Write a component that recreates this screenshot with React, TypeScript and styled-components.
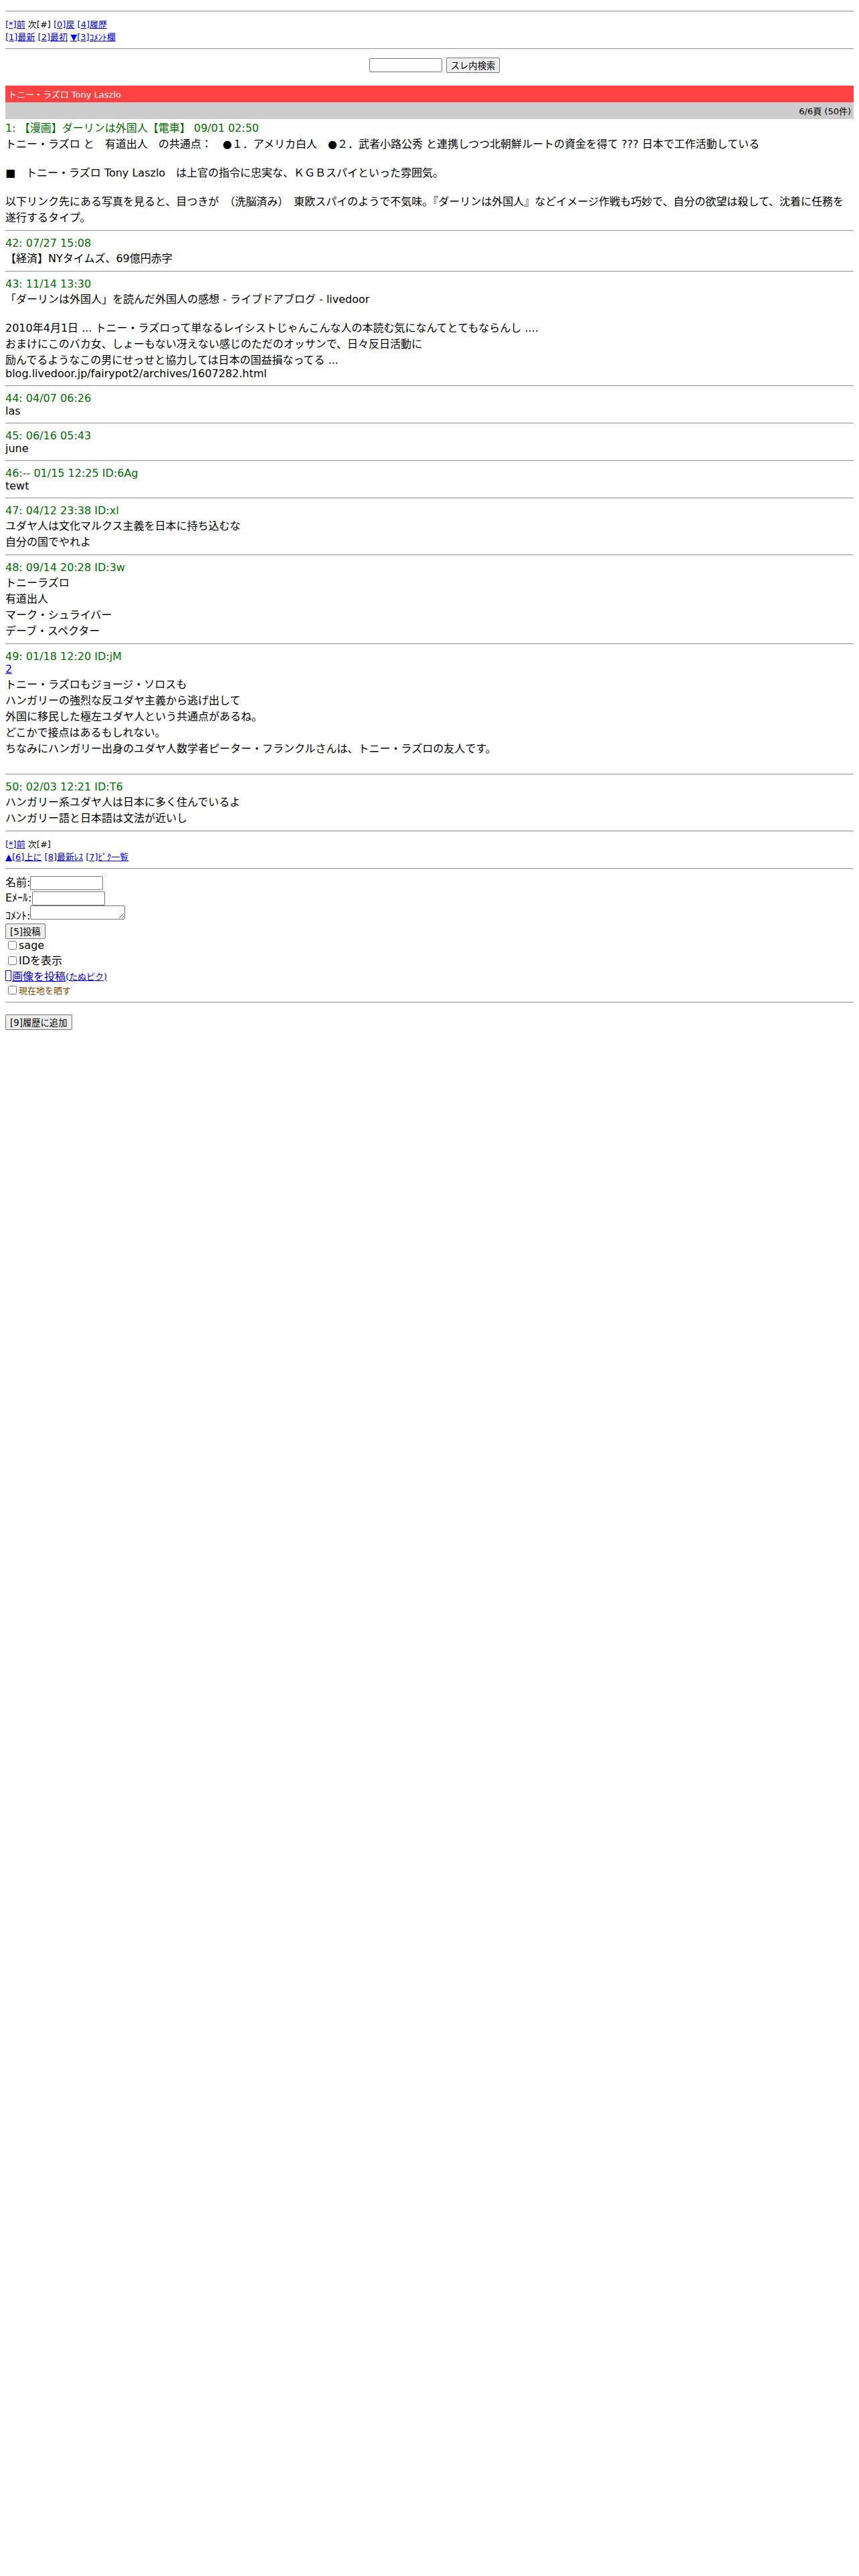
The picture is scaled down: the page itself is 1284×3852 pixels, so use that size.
import React from 'react';
import styled, { createGlobalStyle } from 'styled-components';

const GlobalStyle = createGlobalStyle`
  body {
    margin: 8px;
    background: #fff;
    color: #000;
    font-family: "DejaVu Sans", "Noto Sans CJK JP", sans-serif;
    font-size: 16px;
  }
`;

const Rule = styled.hr`
  margin: 8px 0;
  border: 1px inset;
  color: gray;
`;

const NavBlock = styled.div`
  font-size: 13px;
`;

const NavLink = styled.a`
  color: #0000ee;
  text-decoration: underline;
`;

const Bracket = styled.span`
  color: #0000ee;
`;

const SearchForm = styled.form`
  display: flex;
  justify-content: center;
  align-items: center;
  gap: 6px;
  margin: 0;
  padding: 4px 0 19px 15px;
`;

const TextBox = styled.input<{ $w?: number }>`
  box-sizing: border-box;
  width: ${(p) => p.$w ?? 109}px;
  height: 21px;
  border: 1px solid #767676;
  border-radius: 2px;
  padding: 1px 2px;
  font-size: 13px;
  vertical-align: baseline;
`;

const Btn = styled.button`
  font-family: "DejaVu Sans", "Noto Sans CJK JP", sans-serif;
  font-size: 13.33px;
  padding: 1px 6px;
  border: 1px solid #767676;
  border-radius: 2px;
  background: #efefef;
  color: #000;
`;

const TitleBar = styled.div`
  background: #ff4242;
  color: #fff;
  font-size: 13px;
  padding: 3px 4px;
`;

const PageBar = styled.div`
  background: #cccccc;
  font-size: 13px;
  text-align: right;
  padding: 3px 4px;
`;

const Post = styled.div``;

const PostHead = styled.div`
  color: #006e00;
`;

const PostBody = styled.div``;

const BodyLink = styled.a`
  color: #0000ee;
  text-decoration: underline;
`;

const CommentForm = styled.form`
  margin: 0;
`;

const FieldRow = styled.div`
  line-height: 23px;
`;

const Memo = styled.textarea`
  box-sizing: border-box;
  width: 142px;
  height: 21px;
  vertical-align: baseline;
  border: 1px solid #767676;
  border-radius: 2px;
  resize: both;
  font-size: 13px;
`;

const CheckRow = styled.label<{ $small?: boolean; $tone?: string }>`
  display: block;
  font-size: ${(p) => (p.$small ? '13px' : '16px')};
  color: ${(p) => p.$tone ?? '#000'};
`;

const Check = styled.input`
  margin: 3px 3px 3px 4px;
  width: 13px;
  height: 13px;
  vertical-align: -1px;
`;

const ImageRow = styled.div`
  display: flex;
  align-items: center;
`;

const BrokenImg = styled.span`
  display: inline-block;
  box-sizing: border-box;
  width: 9px;
  height: 16px;
  border: 1px solid #0000ee;
  margin-right: 1px;
`;

const SmallLink = styled.a`
  font-size: 13px;
  color: #0000ee;
  text-decoration: underline;
`;

const Bottom = styled.div`
  padding-top: 9px;
`;

type PostData = { head: string; lines: React.ReactNode[]; trailingBlank?: boolean };

const posts: PostData[] = [
  {
    head: '1: 【漫画】ダーリンは外国人【電車】 09/01 02:50',
    lines: [
      'トニー・ラズロ と　有道出人　の共通点：　●１．アメリカ白人　●２．武者小路公秀 と連携しつつ北朝鮮ルートの資金を得て ??? 日本で工作活動している',
      '',
      '■　トニー・ラズロ Tony Laszlo　は上官の指令に忠実な、ＫＧＢスパイといった雰囲気。',
      '',
      '以下リンク先にある写真を見ると、目つきが　（洗脳済み）　東欧スパイのようで不気味。『ダーリンは外国人』などイメージ作戦も巧妙で、自分の欲望は殺して、沈着に任務を遂行するタイプ。',
    ],
  },
  { head: '42: 07/27 15:08', lines: ['【経済】NYタイムズ、69億円赤字'] },
  {
    head: '43: 11/14 13:30',
    lines: [
      '「ダーリンは外国人」を読んだ外国人の感想 - ライブドアブログ - livedoor',
      '',
      '2010年4月1日 ... トニー・ラズロって単なるレイシストじゃんこんな人の本読む気になんてとてもならんし ....',
      'おまけにこのバカ女、しょーもない冴えない感じのただのオッサンで、日々反日活動に',
      '励んでるようなこの男にせっせと協力しては日本の国益損なってる ...',
      'blog.livedoor.jp/fairypot2/archives/1607282.html',
    ],
  },
  { head: '44: 04/07 06:26', lines: ['las'] },
  { head: '45: 06/16 05:43', lines: ['june'] },
  { head: '46:-- 01/15 12:25 ID:6Ag', lines: ['tewt'] },
  { head: '47: 04/12 23:38 ID:xl', lines: ['ユダヤ人は文化マルクス主義を日本に持ち込むな', '自分の国でやれよ'] },
  { head: '48: 09/14 20:28 ID:3w', lines: ['トニーラズロ', '有道出人', 'マーク・シュライバー', 'デーブ・スペクター'] },
  {
    head: '49: 01/18 12:20 ID:jM',
    lines: [
      <BodyLink href="#">2</BodyLink>,
      'トニー・ラズロもジョージ・ソロスも',
      'ハンガリーの強烈な反ユダヤ主義から逃げ出して',
      '外国に移民した極左ユダヤ人という共通点があるね。',
      'どこかで接点はあるもしれない。',
      'ちなみにハンガリー出身のユダヤ人数学者ピーター・フランクルさんは、トニー・ラズロの友人です。',
    ],
    trailingBlank: true,
  },
  { head: '50: 02/03 12:21 ID:T6', lines: ['ハンガリー系ユダヤ人は日本に多く住んでいるよ', 'ハンガリー語と日本語は文法が近いし'] },
];

function Key({ k, label, pre }: { k: string; label: string; pre?: string }) {
  return (
    <>
      {pre && <NavLink href="#">{pre}</NavLink>}
      <Bracket>[</Bracket>
      <NavLink href="#">{k}</NavLink>
      <Bracket>]</Bracket>
      <NavLink href="#">{label}</NavLink>
    </>
  );
}

export default function App() {
  return (
    <>
      <GlobalStyle />
      <Rule />
      <NavBlock>
        <Key k="*" label="前" /> 次[#] <Key k="0" label="戻" /> <Key k="4" label="履歴" />
        <br />
        <Key k="1" label="最新" /> <Key k="2" label="最初" /> <Key pre="▼" k="3" label="ｺﾒﾝﾄ欄" />
      </NavBlock>
      <Rule />
      <SearchForm onSubmit={(e) => e.preventDefault()}>
        <TextBox type="text" />
        <Btn type="submit">スレ内検索</Btn>
      </SearchForm>
      <TitleBar>トニー・ラズロ Tony Laszlo</TitleBar>
      <PageBar>6/6頁 (50件)</PageBar>
      {posts.map((p, i) => (
        <React.Fragment key={p.head}>
          {i > 0 && <Rule />}
          <Post>
            <PostHead>{p.head}</PostHead>
            <PostBody>
              {p.lines.map((l, j) => (
                <React.Fragment key={j}>
                  {j > 0 && <br />}
                  {l}
                </React.Fragment>
              ))}
              {p.trailingBlank && (
                <>
                  <br />
                  <br />
                </>
              )}
            </PostBody>
          </Post>
        </React.Fragment>
      ))}
      <Rule />
      <NavBlock>
        <Key k="*" label="前" /> 次[#]
        <br />
        <Key pre="▲" k="6" label="上に" /> <Key k="8" label="最新ﾚｽ" /> <Key k="7" label="ﾋﾟｸ一覧" />
      </NavBlock>
      <Rule />
      <CommentForm onSubmit={(e) => e.preventDefault()}>
        <FieldRow>
          名前:
          <TextBox type="text" />
        </FieldRow>
        <FieldRow>
          Eﾒｰﾙ:
          <TextBox type="text" />
        </FieldRow>
        <FieldRow>
          ｺﾒﾝﾄ:
          <Memo rows={1} />
        </FieldRow>
        <Btn type="submit">[5]投稿</Btn>
        <CheckRow>
          <Check type="checkbox" />sage
        </CheckRow>
        <CheckRow>
          <Check type="checkbox" />IDを表示
        </CheckRow>
        <ImageRow>
          <BrokenImg />
          <BodyLink href="#">画像を投稿</BodyLink>
          <SmallLink href="#">(たぬピク)</SmallLink>
        </ImageRow>
        <CheckRow $small $tone="#7a4a00">
          <Check type="checkbox" />現在地を晒す
        </CheckRow>
      </CommentForm>
      <Rule />
      <Bottom>
        <Btn type="button">[9]履歴に追加</Btn>
      </Bottom>
    </>
  );
}
